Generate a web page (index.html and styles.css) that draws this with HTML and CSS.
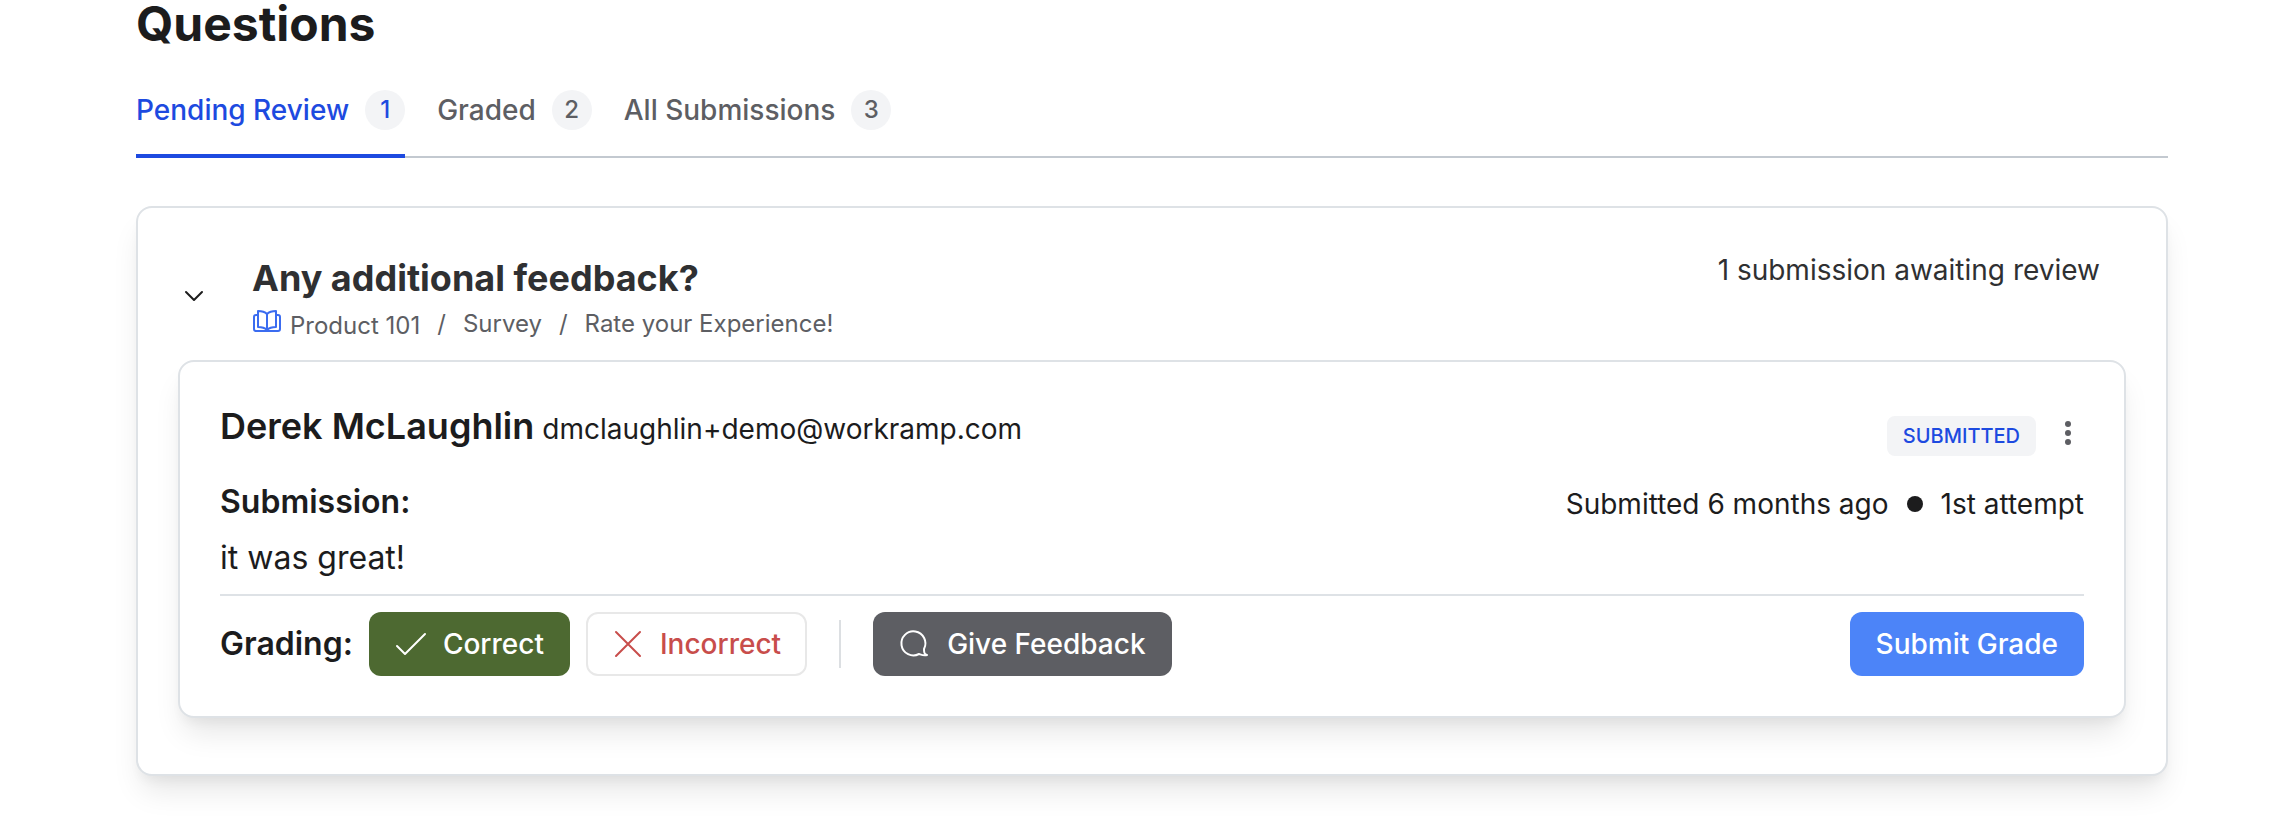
FILE: index.html
```html
<!DOCTYPE html>
<html lang="en">
<head>
  <meta charset="UTF-8">
  <title>Questions</title>
  <link rel="stylesheet" href="styles.css">
</head>
<body>

  <main class="page">
    <h1>Questions</h1>

    <nav class="tabs">
      <a href="#pending" class="tab active">Pending Review <span class="count">1</span></a>
      <a href="#graded" class="tab">Graded <span class="count">2</span></a>
      <a href="#all" class="tab">All Submissions <span class="count">3</span></a>
    </nav>

    <section class="card question">
      <div class="question-header">
        <button class="toggle" aria-label="Collapse question">
          <svg width="20" height="20" viewBox="0 0 20 20" fill="none" stroke="currentColor" stroke-width="2" stroke-linecap="round" stroke-linejoin="round">
            <path d="M2 8l8 8 8-8"/>
          </svg>
        </button>
        <div class="question-info">
          <h2>Any additional feedback?</h2>
          <div class="breadcrumb">
            <a href="#product" class="course">
              <svg width="30" height="26" viewBox="-1 -2 30 26" fill="none" stroke="currentColor" stroke-width="2" stroke-linejoin="round">
                <path d="M5 5H3a2 2 0 0 0-2 2v12a2 2 0 0 0 2 2h22a2 2 0 0 0 2-2V7a2 2 0 0 0-2-2h-2"/>
                <path d="M14 4c-2-2-5-3-9-3v16c4 0 7 1 9 3 2-2 5-3 9-3V1c-4 0-7 1-9 3z"/>
                <path d="M14 4v17"/>
              </svg>
              <span>Product 101</span>
            </a>
            <span>/</span>
            <a href="#survey">Survey</a>
            <span>/</span>
            <a href="#experience">Rate your Experience!</a>
          </div>
        </div>
        <div class="awaiting">1 submission awaiting review</div>
      </div>

      <article class="card submission">
        <div class="row">
          <div class="person">
            <h3>Derek McLaughlin</h3>
            <span class="email">dmclaughlin+demo@workramp.com</span>
          </div>
          <div class="status">
            <span class="status-badge">SUBMITTED</span>
            <button class="menu" aria-label="More options">
              <svg width="32" height="32" viewBox="0 0 32 32" fill="currentColor">
                <circle cx="16" cy="4" r="3"/>
                <circle cx="16" cy="13" r="3"/>
                <circle cx="16" cy="22" r="3"/>
              </svg>
            </button>
          </div>
        </div>

        <div class="row answer-row">
          <div>
            <h4>Submission:</h4>
            <p class="answer">it was great!</p>
          </div>
          <div class="meta">
            <span>Submitted 6 months ago</span>
            <span class="dot"></span>
            <span>1st attempt</span>
          </div>
        </div>

        <div class="grading">
          <h4>Grading:</h4>
          <button class="btn correct">
            <svg width="32" height="32" viewBox="0 0 32 32" fill="none" stroke="currentColor" stroke-width="2" stroke-linecap="round" stroke-linejoin="round">
              <path d="M2 18l8 8L30 6"/>
            </svg>
            Correct
          </button>
          <button class="btn incorrect">
            <svg width="32" height="32" viewBox="0 0 32 32" fill="none" stroke="currentColor" stroke-width="2" stroke-linecap="round">
              <path d="M4 4l24 24M28 4L4 28"/>
            </svg>
            Incorrect
          </button>
          <span class="divider"></span>
          <button class="btn feedback">
            <svg width="32" height="32" viewBox="0 0 32 32" fill="none" stroke="currentColor" stroke-width="2" stroke-linejoin="round">
              <path d="M25 21A12 12 0 1 0 20 26c3 1 5 2 8 1-3-1-3-3-3-6z"/>
            </svg>
            Give Feedback
          </button>
          <button class="btn submit">Submit Grade</button>
        </div>
      </article>
    </section>
  </main>

</body>
</html>
```
FILE: styles.css
```css
* {
  box-sizing: border-box;
}

body {
  margin: 0;
  background-color: #fff;
  color: #1c1c1d;
  font-family: Inter, sans-serif;
  font-size: 28px;
}

.page {
  padding: 0 108px 56px 136px;
}

h1, h2, h3, h4, p {
  margin: 0;
}

h1 {
  font-size: 48px;
  line-height: 48px;
  font-weight: 700;
}

a {
  color: inherit;
  text-decoration: none;
}

button {
  font: inherit;
  border: none;
  background: none;
  padding: 0;
  cursor: pointer;
}

svg {
  display: block;
  flex-shrink: 0;
}

/* Tabs */
.tabs {
  display: flex;
  gap: 32px;
  margin-top: 42px;
  box-shadow: inset 0 -2px #c3c9d0;
}

.tab {
  display: flex;
  align-items: center;
  gap: 16px;
  padding-bottom: 24px;
  border-bottom: 4px solid transparent;
  color: #5d5e63;
  font-weight: 500;
}

.tab.active {
  color: #1d4ae0;
  border-bottom-color: #1d4ae0;
}

.count {
  width: 40px;
  border-radius: 50%;
  background-color: #f3f4f6;
  font-size: 24px;
  line-height: 40px;
  text-align: center;
}

/* Cards */
.card {
  border: 2px solid #dee2e6;
  border-radius: 16px;
  background-color: #fff;
  box-shadow: 0 20px 30px -6px rgba(0, 0, 0, 0.1), 0 8px 12px -4px rgba(0, 0, 0, 0.05);
}

.question {
  margin-top: 48px;
  padding: 40px 40px 56px;
}

.question-header {
  display: flex;
  padding-right: 26px;
  margin-bottom: 20px;
}

.toggle {
  width: 32px;
  margin-right: 42px;
  display: flex;
  align-items: center;
  justify-content: center;
  color: #1c1c1d;
}

.question-info {
  flex: 1;
}

h2 {
  color: #2f3032;
  font-size: 36px;
  line-height: 60px;
  font-weight: 700;
}

.breadcrumb {
  display: flex;
  gap: 17px;
  color: #5d5e63;
  font-size: 24px;
  line-height: 32px;
}

.course {
  display: flex;
  gap: 8px;
}

.course span {
  padding-top: 2px;
  margin-bottom: -2px;
}

.course svg {
  color: #3b6cf0;
}

.awaiting {
  color: #2f3032;
  line-height: 44px;
}

/* Submission */
.submission {
  padding: 40px;
}

.row {
  display: flex;
  justify-content: space-between;
}

.person {
  display: flex;
  align-items: baseline;
  gap: 8px;
}

h3 {
  font-size: 36px;
  line-height: 48px;
  font-weight: 600;
}

.status {
  display: flex;
  align-items: center;
  gap: 16px;
  padding-top: 14px;
}

.status-badge {
  padding: 0 16px;
  border-radius: 8px;
  background-color: #f3f4f6;
  color: #1d4ae0;
  font-size: 20px;
  line-height: 40px;
  font-weight: 500;
}

.menu {
  color: #5d5e63;
}

.answer-row {
  margin-top: 22px;
  padding-bottom: 12px;
  border-bottom: 2px solid #dee2e6;
}

h4 {
  font-size: 32px;
  line-height: 48px;
  font-weight: 600;
}

.answer {
  margin-top: 8px;
  font-size: 32px;
  line-height: 48px;
}

.meta {
  display: flex;
  align-items: center;
  align-self: flex-start;
  gap: 18px;
  line-height: 52px;
}

.dot {
  width: 16px;
  height: 16px;
  border-radius: 50%;
  background-color: #1c1c1d;
}

/* Grading bar */
.grading {
  display: flex;
  align-items: center;
  gap: 16px;
  margin-top: 16px;
}

.btn {
  display: flex;
  align-items: center;
  gap: 16px;
  height: 64px;
  padding: 0 24px;
  border: 2px solid transparent;
  border-radius: 12px;
  color: #fff;
  font-weight: 500;
}

.correct {
  background-color: #4d6931;
}

.incorrect {
  border-color: #e8e8e8;
  color: #c84d4b;
}

.feedback {
  background-color: #5d5e63;
}

.submit {
  margin-left: auto;
  background-color: #4c84f8;
}

.divider {
  width: 2px;
  height: 48px;
  margin: 0 16px;
  background-color: #dcdfe2;
}
```
